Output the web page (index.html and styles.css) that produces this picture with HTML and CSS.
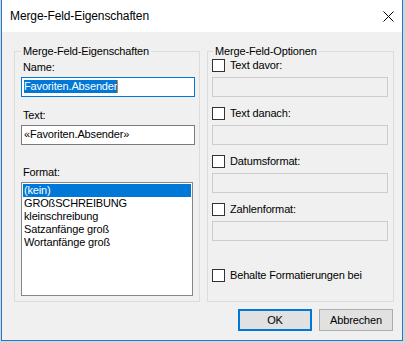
FILE: index.html
```html
<!DOCTYPE html>
<html lang="de">
<head>
  <meta charset="UTF-8">
  <title>Merge-Feld-Eigenschaften</title>
  <link rel="stylesheet" href="styles.css">
</head>
<body>
  <div class="window">
    <div class="titlebar">
      <span class="title">Merge-Feld-Eigenschaften</span>
      <svg class="close" width="11" height="11" viewBox="0 0 11 11">
        <path d="M0.5 0.5L10.5 10.5M10.5 0.5L0.5 10.5" stroke="#000" stroke-width="1" fill="none"/>
      </svg>
    </div>

    <div class="client">
      <div class="groups">
        <fieldset class="group group-left">
          <legend>Merge-Feld-Eigenschaften</legend>
          <div class="label label-name">Name:</div>
          <div class="textbox focused"><span class="sel">Favoriten.Absender</span><span class="caret"></span></div>
          <div class="label label-text">Text:</div>
          <div class="textbox">«Favoriten.Absender»</div>
          <div class="label label-format">Format:</div>
          <div class="listbox">
            <div class="item selected">(kein)</div>
            <div class="item">GROßSCHREIBUNG</div>
            <div class="item">kleinschreibung</div>
            <div class="item">Satzanfänge groß</div>
            <div class="item">Wortanfänge groß</div>
          </div>
        </fieldset>

        <fieldset class="group group-right">
          <legend>Merge-Feld-Optionen</legend>
          <div class="option">
            <div class="check"><span class="box"></span>Text davor:</div>
            <div class="textbox disabled"></div>
          </div>
          <div class="option">
            <div class="check"><span class="box"></span>Text danach:</div>
            <div class="textbox disabled"></div>
          </div>
          <div class="option">
            <div class="check"><span class="box"></span>Datumsformat:</div>
            <div class="textbox disabled"></div>
          </div>
          <div class="option">
            <div class="check"><span class="box"></span>Zahlenformat:</div>
            <div class="textbox disabled"></div>
          </div>
          <div class="check keep"><span class="box"></span>Behalte Formatierungen bei</div>
        </fieldset>
      </div>

      <div class="buttons">
        <button class="btn default">OK</button>
        <button class="btn">Abbrechen</button>
      </div>
    </div>
  </div>
</body>
</html>
```

FILE: styles.css
```css
body {
  margin: 0;
  background-color: #d4d4d4;
  font-family: "Liberation Sans", Arial, sans-serif;
  font-size: 11px;
  letter-spacing: -0.15px;
  color: #000;
}
.window {
  margin-left: 1px;
  width: 402px;
  height: 341px;
  box-sizing: border-box;
  border: 1px solid #1f78d1;
  border-top: none;
  background-color: #f0f0f0;
}
.titlebar {
  height: 32px;
  background-color: #fff;
  display: flex;
  align-items: center;
  justify-content: space-between;
  padding: 0 8px;
}
.title { font-size: 12px; letter-spacing: -0.1px; line-height: 32px; }
.close { display: block; }

.client { padding: 13px 0 0 12px; }
.groups { display: flex; gap: 7px; }
.group {
  margin: 0;
  min-width: 0;
  box-sizing: border-box;
  height: 257px;
  border: 1px solid #dcdcdc;
  padding: 0 0 0 6px;
}
.group-left { width: 186px; }
.group-right { width: 187px; padding-left: 4px; }
.group legend { padding: 0 2px; line-height: 13px; height: 13px; }
.group-right legend { margin-left: 1px; }

.label { height: 13px; line-height: 13px; padding-left: 2px; }
.label-name { margin-top: 3px; }
.label-text { margin-top: 12px; }
.label-format { margin-top: 21px; }

.textbox {
  box-sizing: border-box;
  width: 174px;
  height: 20px;
  margin-top: 3px;
  border: 1px solid #7a7a7a;
  background-color: #fff;
  padding: 2px 1px 0 2px;
  line-height: 13px;
  white-space: nowrap;
  display: flex;
}
.textbox.focused { border-color: #0078d7; }
.sel { background-color: #0078d7; color: #fff; height: 13px; }
.caret { width: 1px; height: 13px; background-color: #d9822b; }
.textbox.disabled {
  width: 176px;
  margin-top: 5px;
  border-color: #cccccc;
  background-color: #f0f0f0;
}

.listbox {
  box-sizing: border-box;
  width: 172px;
  height: 114px;
  margin-top: 3px;
  border: 1px solid #828790;
  background-color: #fff;
  padding: 1px;
}
.item { height: 13px; line-height: 13px; padding-left: 1px; white-space: nowrap; }
.item.selected { background-color: #0078d7; color: #fff; }

.option { margin-top: 10px; }
.option:first-of-type { margin-top: 1px; }
.check { display: flex; align-items: center; height: 13px; line-height: 13px; white-space: nowrap; }
.box {
  box-sizing: border-box;
  width: 13px;
  height: 13px;
  border: 1px solid #333;
  background-color: #fff;
  margin-right: 5px;
}
.keep { margin-top: 28px; }

.buttons {
  display: flex;
  justify-content: flex-end;
  gap: 7px;
  margin-top: 7px;
  padding-right: 9px;
}
.btn {
  box-sizing: border-box;
  width: 74px;
  height: 22px;
  padding: 0;
  font-family: inherit;
  font-size: 11px;
  letter-spacing: -0.15px;
  color: #000;
  background-color: #e1e1e1;
  border: 1px solid #adadad;
}
.btn.default { border: 2px solid #0078d7; }
```
